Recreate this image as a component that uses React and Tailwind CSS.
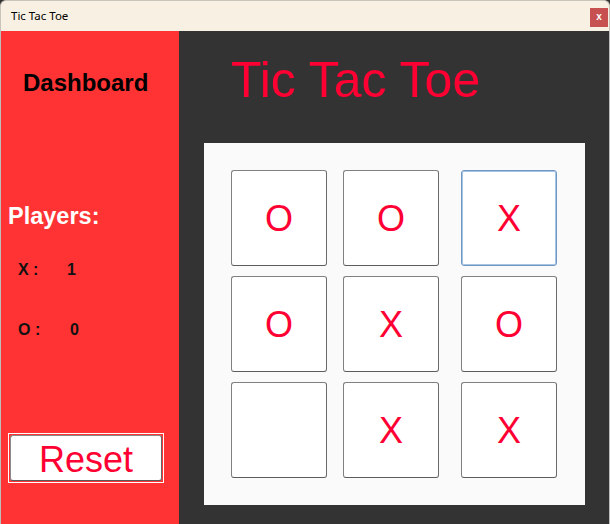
import React from "react";

const board = [
  ["O", "O", "X"],
  ["O", "X", "O"],
  ["", "X", "X"],
];

function Cell({ v, focused }) {
  return (
    <div
      className={
        "w-[96px] h-[96px] bg-white rounded-[3px] flex items-center justify-center border " +
        (focused
          ? "border-[#6f97c4] shadow-[inset_0_0_0_1px_#a9c4e2]"
          : "border-[#808080] border-b-[#5c5c5c] border-r-[#6a6a6a]")
      }
    >
      <span
        className="text-[36px] leading-none text-[#ff0033] pt-[1px]"
        style={{ fontFamily: '"Liberation Sans", Arial, sans-serif' }}
      >
        {v}
      </span>
    </div>
  );
}

export default function App() {
  const sans = { fontFamily: '"Liberation Sans", Arial, sans-serif' };
  return (
    <div className="w-[610px] h-[524px] flex flex-col overflow-hidden bg-[#333333]" style={sans}>
      {/* title bar */}
      <div className="h-[31px] flex items-center justify-between bg-[#f8f1e3] rounded-t-[6px] border-l border-r border-t border-[#c9c4ba] pl-[10px] pr-[1px]">
        <span
          className="text-[11.5px] text-black leading-none"
          style={{ fontFamily: '"Noto Sans", "Open Sans", sans-serif' }}
        >
          Tic Tac Toe
        </span>
        <div className="w-[18px] h-[19px] bg-[#c75050] flex items-center justify-center mb-[-2px]">
          <span className="text-white text-[10px] font-bold leading-none" style={sans}>
            x
          </span>
        </div>
      </div>

      <div className="flex flex-1 border-l border-r border-[#bdbdbd]">
        {/* sidebar */}
        <div className="w-[178px] bg-[#ff3333] flex flex-col">
          <div className="pt-[39px] pl-[22px] text-[24px] leading-[26px] font-bold text-black">
            Dashboard
          </div>
          <div className="mt-[107px] pl-[7px] text-[23.5px] leading-[26px] font-bold text-white">
            Players:
          </div>
          <div className="mt-[32px] pl-[17px] flex text-[16px] leading-[18px] font-bold text-[#111]">
            <span className="w-[49px]">X :</span>
            <span>1</span>
          </div>
          <div className="mt-[42px] pl-[17px] flex text-[16px] leading-[18px] font-bold text-[#111]">
            <span className="w-[52px]">O :</span>
            <span>0</span>
          </div>
          <div className="mt-[94px] ml-[7px] w-[156px] h-[50px] border border-white p-px">
            <div className="w-full h-full bg-white rounded-[3px] border border-[#8a8a8a] border-b-[#5a5a5a] border-r-[#666] flex items-center justify-center pt-[3px]">
              <span className="text-[36px] leading-none text-[#ff0033]">Reset</span>
            </div>
          </div>
        </div>

        {/* main */}
        <div className="flex-1 flex flex-col">
          <div className="mt-[21px] pl-[52px] text-[50px] leading-[56px] text-[#ff0033]">
            Tic Tac Toe
          </div>
          <div className="mt-[35px] ml-[25px] w-[381px] h-[362px] bg-[#fafafa] pt-[27px] pl-[27px]">
            <div className="grid grid-cols-[112px_118px_96px] gap-y-[10px]">
              {board.map((row, r) =>
                row.map((v, c) => (
                  <Cell key={r + "-" + c} v={v} focused={r === 0 && c === 2} />
                ))
              )}
            </div>
          </div>
        </div>
      </div>
    </div>
  );
}
